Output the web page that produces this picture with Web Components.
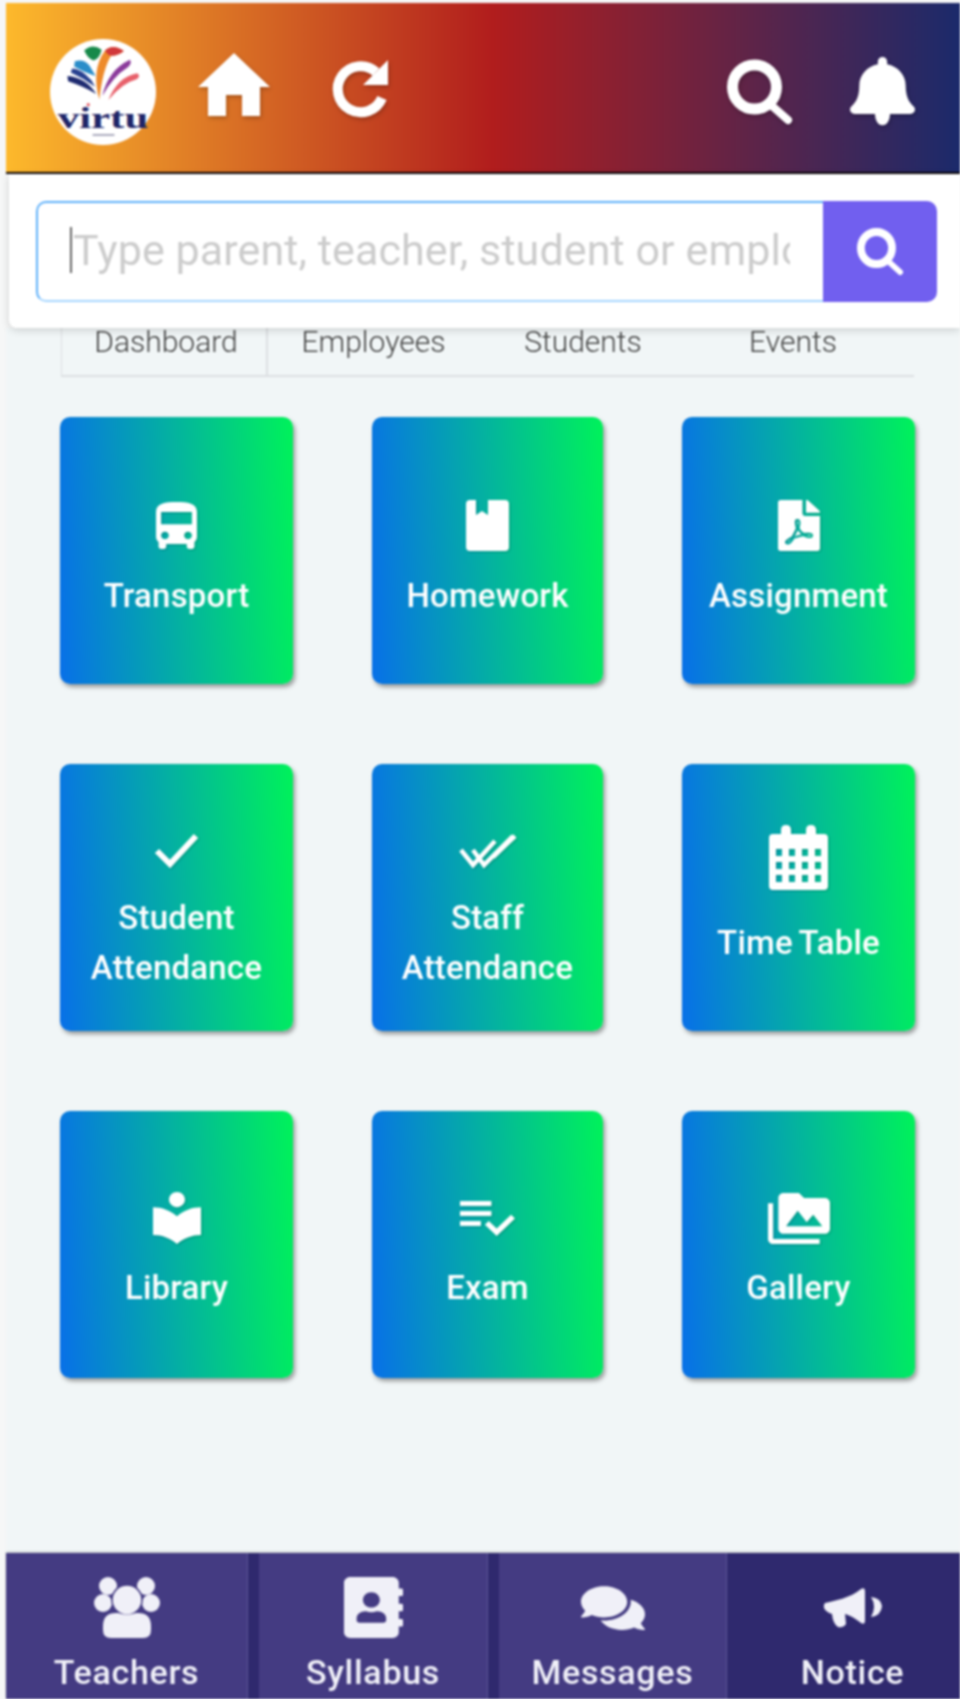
<!DOCTYPE html>
<html lang="en">
<head>
<meta charset="utf-8">
<title>Dashboard</title>
<style>
  html, body { margin: 0; padding: 0; height: 100%; }
  body { background: #f6f7f7; font-family: Roboto, "Liberation Sans", sans-serif; overflow: hidden; }
</style>
</head>
<body>
<app-shell>
  <app-header></app-header>
  <search-panel placeholder="Type parent, teacher, student or employee"></search-panel>
  <main-area>
    <tab-bar>
      <tab-item active>Dashboard</tab-item>
      <tab-item>Employees</tab-item>
      <tab-item>Students</tab-item>
      <tab-item>Events</tab-item>
    </tab-bar>
    <tile-grid>
      <app-tile icon="bus" w="41" h="47">Transport</app-tile>
      <app-tile icon="book" w="43" h="51">Homework</app-tile>
      <app-tile icon="pdf" w="42" h="51">Assignment</app-tile>
      <app-tile icon="check" w="45" h="35" shift="6">Student<br>Attendance</app-tile>
      <app-tile icon="checks" w="58" h="35" shift="6">Staff<br>Attendance</app-tile>
      <app-tile icon="calendar" w="59" h="65" shift="-30">Time Table</app-tile>
      <app-tile icon="library" w="48" h="52" lift="3">Library</app-tile>
      <app-tile icon="exam" w="55" h="35" lift="3">Exam</app-tile>
      <app-tile icon="gallery" w="62" h="51" lift="3">Gallery</app-tile>
    </tile-grid>
  </main-area>
  <bottom-nav>
    <nav-item icon="users" w="65" h="61" width="242">Teachers</nav-item>
    <nav-item icon="contacts" w="59" h="61" width="229">Syllabus</nav-item>
    <nav-item icon="comments" w="64" h="50" width="228">Messages</nav-item>
    <nav-item icon="bullhorn" w="59" h="40" width="233" active>Notice</nav-item>
  </bottom-nav>
</app-shell>

<script>
// calendar holes, 4 x 3
let calendarHoles = '';
[24, 37, 50].forEach(y => {
  [7, 20, 33, 46].forEach(x => {
    calendarHoles += `M${x} ${y}h6v7h-6z`;
  });
});

const ICONS = {
  home: { vb: '0 0 72 63', body: '<path d="M36 0L72 34H62V63H44V42H28V63H10V34H0Z"/>' },
  redo: { vb: '0 0 60 57', body: '<path d="M45 12A23 23 0 1 0 51 38" fill="none" stroke="currentColor" stroke-width="10"/><path d="M57 0V25H32Z"/>' },
  search: { vb: '0 0 65 63', body: '<circle cx="27.500" cy="26" r="22" fill="none" stroke="currentColor" stroke-width="11"/><path d="M44 44L61 59" fill="none" stroke="currentColor" stroke-width="8" stroke-linecap="round"/>' },
  bell: { vb: '0 0 448 512', body: '<path d="M224 500c30 0 52-34 52-90H172c0 56 22 90 52 90zm215.39-137.71c-19.32-20.76-55.47-51.99-55.47-154.29 0-77.7-54.48-139.9-127.94-155.16V32c0-17.67-14.32-32-31.98-32s-31.98 14.33-31.98 32v20.84C118.56 68.1 64.08 130.3 64.08 208c0 102.3-36.15 133.53-55.47 154.29-6 6.45-8.66 14.16-8.61 21.71.11 16.4 12.98 32 32.1 32h383.8c19.12 0 32-15.6 32.1-32 .05-7.55-2.61-15.27-8.61-21.71z"/>' },
  bus: { vb: '4 2 16 19', body: '<path d="M4 16c0 .88.39 1.67 1 2.22V20c0 .55.45 1 1 1h1c.55 0 1-.45 1-1v-1h8v1c0 .55.45 1 1 1h1c.55 0 1-.45 1-1v-1.78c.61-.55 1-1.34 1-2.22V6c0-3.5-3.58-4-8-4s-8 .5-8 4v10zm3.5 1c-.83 0-1.5-.67-1.5-1.5S6.67 14 7.5 14s1.5.67 1.5 1.5S8.33 17 7.5 17zm9 0c-.83 0-1.5-.67-1.5-1.5s.67-1.5 1.5-1.5 1.5.67 1.5 1.5-.67 1.5-1.5 1.5zm1.5-6H6V6h12v5z"/>' },
  book: { vb: '0 0 43 51', body: '<path d="M4 0H10V15L16 11L22 15V0H39Q43 0 43 4V47Q43 51 39 51H4Q0 51 0 47V4Q0 0 4 0Z"/>' },
  pdf: { vb: '0 0 384 512', body: '<path d="M181.9 256.1c-5-16-4.9-46.9-2-46.9 8.4 0 7.6 36.9 2 46.9zm-1.7 47.2c-7.7 20.2-17.3 43.3-28.4 62.7 18.3-7 39-17.2 62.9-21.9-12.7-9.6-24.9-23.4-34.5-40.8zM86.1 428.1c0 .8 13.2-5.4 34.9-40.2-6.7 6.3-29.1 24.5-34.9 40.2zM248 160h136v328c0 13.3-10.7 24-24 24H24c-13.3 0-24-10.7-24-24V24C0 10.7 10.7 0 24 0h200v136c0 13.2 10.8 24 24 24zm-8 171.8c-20-12.2-33.3-29-42.7-53.8 4.5-18.5 11.6-46.6 6.2-64.2-4.7-29.4-42.4-26.5-47.8-6.8-5 18.3-.4 44.1 8.1 77-11.6 27.6-28.7 64.6-40.8 85.8-.1 0-.1.1-.2.1-27.1 13.9-73.6 44.5-54.5 68 5.6 6.9 16 10 21.5 10 17.9 0 35.7-18 61.1-61.8 25.8-8.5 54.1-19.1 79-23.2 21.7 11.8 47.1 19.5 64 19.5 29.2 0 31.2-32 19.7-43.4-13.9-13.6-54.3-9.7-73.6-7.2zM377 105L279 7c-4.5-4.5-10.6-7-17-7h-6v128h128v-6.1c0-6.3-2.5-12.4-7-16.9zm-74.1 255.3c4.1-2.7-2.5-11.9-42.8-9 37.1 15.8 42.8 9 42.8 9z"/>' },
  check: { vb: '0 0 45 35', body: '<path d="M3 18L16 31L42 3" fill="none" stroke="currentColor" stroke-width="6"/>' },
  checks: { vb: '0 0 58 35', body: '<path d="M2 17L14 32L36 8M14 17L25 32L54 3M34 24L56 3" fill="none" stroke="currentColor" stroke-width="4.5"/>' },
  calendar: { vb: '0 0 59 65', body: `<path fill-rule="evenodd" d="M4 9H12V5Q12 0 17 0T22 5V9H37V5Q37 0 42 0T47 5V9H55Q59 9 59 13V61Q59 65 55 65H4Q0 65 0 61V13Q0 9 4 9Z${calendarHoles}"/>` },
  library: { vb: '3 2 18 20.55', body: '<path d="M12 11.55C9.64 9.35 6.48 8 3 8v11c3.48 0 6.64 1.35 9 3.55 2.36-2.19 5.52-3.55 9-3.55V8c-3.48 0-6.64 1.35-9 3.55zM12 8c1.66 0 3-1.34 3-3s-1.34-3-3-3-3 1.34-3 3 1.34 3 3 3z"/>' },
  exam: { vb: '2 6 21 14', body: '<path d="M14 10H2v2h12v-2zm0-4H2v2h12V6zM2 16h8v-2H2v2zm19.5-4.5L23 13l-6.99 7-4.51-4.5L13 14l3.01 3 5.49-5.5z"/>' },
  gallery: { vb: '0 2 24 20', body: '<path d="M2 6H0v5h.01L0 20c0 1.1.9 2 2 2h18v-2H2V6zm20-2h-8l-2-2H6c-1.1 0-1.99.9-1.99 2L4 16c0 1.1.9 2 2 2h16c1.1 0 2-.9 2-2V6c0-1.1-.9-2-2-2zM7 15l4.5-6 3.5 4.51 2.5-3.01L21 15H7z"/>' },
  users: { vb: '0 0 65 61', body: '<circle cx="14" cy="9" r="9"/><circle cx="52" cy="9" r="9"/><circle cx="9" cy="26" r="9"/><circle cx="57" cy="26" r="9"/><circle cx="33" cy="23" r="15" stroke="#443b82" stroke-width="1.5"/><path d="M9 53V49Q9 35 24 36Q33 39 42 36Q57 35 57 49V53Q57 61 49 61H17Q9 61 9 53Z"/>' },
  contacts: { vb: '0 0 448 512', body: '<path d="M436 160c6.6 0 12-5.4 12-12v-40c0-6.6-5.4-12-12-12h-20V48c0-26.5-21.5-48-48-48H48C21.5 0 0 21.5 0 48v416c0 26.5 21.5 48 48 48h320c26.5 0 48-21.5 48-48v-48h20c6.6 0 12-5.4 12-12v-40c0-6.6-5.4-12-12-12h-20v-64h20c6.6 0 12-5.4 12-12v-40c0-6.6-5.4-12-12-12h-20v-64h20zm-228-32c35.3 0 64 28.7 64 64s-28.7 64-64 64-64-28.7-64-64 28.7-64 64-64zm112 236.8c0 10.6-10 19.2-22.4 19.2H118.4C106 384 96 375.4 96 364.8v-19.2c0-31.8 30.1-57.6 67.2-57.6h5c12.3 5.1 25.7 8 39.8 8s27.6-2.9 39.8-8h5c37.1 0 67.2 25.8 67.2 57.6v19.2z"/>' },
  comments: { vb: '0 0 576 512', body: '<path d="M416 192c0-88.4-93.1-160-208-160S0 103.6 0 192c0 34.3 14.1 65.9 38 92-13.4 30.2-35.5 54.2-35.8 54.5-2.2 2.3-2.8 5.7-1.5 8.7S4.8 352 8 352c36.6 0 66.9-12.3 88.7-25 32.2 15.7 70.3 25 111.3 25 114.9 0 208-71.6 208-160zm122 220c23.9-26 38-57.7 38-92 0-66.9-53.5-124.2-129.3-148.1.9 6.6 1.3 13.3 1.3 20.1 0 105.9-107.7 192-240 192-10.8 0-21.3-.8-31.7-1.9C207.8 439.6 281.8 480 368 480c41 0 79.1-9.2 111.3-25 21.8 12.7 52.1 25 88.7 25 3.2 0 6.1-1.9 7.3-4.8 1.3-2.9.7-6.3-1.5-8.7-.3-.3-22.4-24.2-35.8-54.5z"/>' },
  bullhorn: { vb: '0 0 59 40', body: '<path d="M2 15C10 13 28 10 38 1Q42-1 42 3V33Q42 37 38 35C32 30 26 27 22 26L23 36Q20 40 15 39Q10 36 9 26Q3 24 1 20Q0 17 2 15Z"/><path d="M48 9Q54 18 48 29Q58 28 59 18Q58 10 48 9Z"/>' }
};

class UiIcon extends HTMLElement {
  connectedCallback() {
    const icon = ICONS[this.getAttribute('name')];
    const w = this.getAttribute('w');
    const h = this.getAttribute('h');
    this.attachShadow({ mode: 'open' });
    this.shadowRoot.innerHTML = `
      <style>
        :host { display: block; width: ${w}px; height: ${h}px; flex: none; }
        svg { display: block; width: 100%; height: 100%; fill: currentColor; overflow: visible; }
      </style>
      <svg viewBox="${icon.vb}" preserveAspectRatio="none" aria-hidden="true">${icon.body}</svg>
    `;
  }
}

class AppShell extends HTMLElement {
  constructor() {
    super();
    this.attachShadow({ mode: 'open' });
    this.shadowRoot.innerHTML = `
      <style>
        :host {
          display: flex;
          flex-direction: column;
          height: 1699px;
          box-sizing: border-box;
          padding: 3px 0 0 6px;
          overflow: hidden;
          filter: blur(0.8px);
        }
      </style>
      <slot></slot>
    `;
  }
}

class AppLogo extends HTMLElement {
  constructor() {
    super();
    this.attachShadow({ mode: 'open' });
    this.shadowRoot.innerHTML = `
      <style>
        :host { display: block; width: 106px; height: 106px; flex: none; }
        svg { display: block; width: 100%; height: 100%; }
        text { font: bold 88px "Liberation Serif", serif; fill: #1e2568; }
      </style>
      <svg viewBox="58 58 316 316">
        <circle cx="216" cy="216" r="158" fill="#fff"/>
        <path d="M160 92Q185 70 212 90Q205 118 188 122Q170 116 160 92Z" fill="#16894a"/>
        <path d="M222 92Q245 70 278 94Q262 108 240 108Q215 150 205 238Q180 150 222 92Z" fill="#ee8a2a"/>
        <path d="M222 92Q245 70 278 94Q262 108 240 108Q230 106 222 92Z" fill="#d1383a"/>
        <path d="M132 124Q160 116 176 138L194 168Q165 160 130 140Z" fill="#2a8dc9"/>
        <path d="M124 146Q150 146 182 182L192 200Q160 176 120 158Z" fill="#27408f"/>
        <path d="M110 168Q165 172 196 222Q160 200 112 184Z" fill="#1e2a70"/>
        <path d="M296 120Q304 130 290 142Q245 170 214 228Q232 150 296 120Z" fill="#8b3a9b"/>
        <path d="M318 160Q330 168 316 178Q272 190 232 240Q260 170 318 160Z" fill="#e8606a"/>
        <circle cx="172" cy="254" r="5" fill="#e8606a"/>
        <text x="216" y="322" text-anchor="middle" textLength="270" lengthAdjust="spacingAndGlyphs">virtu</text>
        <path d="M185 344H250" stroke="#9a9ab0" stroke-width="5"/>
      </svg>
    `;
  }
}

class AppHeader extends HTMLElement {
  constructor() {
    super();
    this.attachShadow({ mode: 'open' });
    this.shadowRoot.innerHTML = `
      <style>
        :host {
          display: flex;
          align-items: center;
          box-sizing: border-box;
          height: 171px;
          padding: 9px 45px 0 44px;
          color: #fff;
          background: linear-gradient(90deg, #fdb92c 0%, #b11d1d 51%, #1b2a6b 100%);
          border-bottom: 2px solid #0a0508;
          flex: none;
        }
        .icons { display: flex; flex: 1; align-items: center; filter: drop-shadow(1px 2px 2px rgba(0,0,0,.25)); }
        .home { margin-left: 42px; margin-top: -15px; }
        .redo { margin-left: 61px; margin-top: -8px; }
        .right { display: flex; align-items: center; gap: 58px; margin-left: auto; }
      </style>
      <app-logo></app-logo>
      <div class="icons">
        <ui-icon class="home" name="home" w="72" h="63"></ui-icon>
        <ui-icon class="redo" name="redo" w="60" h="57"></ui-icon>
        <div class="right">
          <ui-icon name="search" w="65" h="63"></ui-icon>
          <ui-icon name="bell" w="65" h="70"></ui-icon>
        </div>
      </div>
    `;
  }
}

class SearchPanel extends HTMLElement {
  connectedCallback() {
    this.attachShadow({ mode: 'open' });
    this.shadowRoot.innerHTML = `
      <style>
        :host {
          display: flex;
          position: relative;
          z-index: 2;
          flex: none;
          height: 154px;
          box-sizing: border-box;
          margin-left: 3px;
          padding: 27px 23px 26px 27px;
          background: #fff;
          border-radius: 0 0 0 8px;
          box-shadow: 0 2px 8px rgba(0,0,0,.16);
        }
        .field {
          flex: 1;
          display: flex;
          align-items: center;
          min-width: 0;
          box-sizing: border-box;
          padding: 0 33px 3px 32px;
          border: 2px solid #5eb0fa;
          border-bottom-color: #a6d6ff;
          border-right: 0;
          border-radius: 10px 0 0 10px;
        }
        .caret { flex: none; width: 2px; height: 46px; margin-right: 1px; background: #666; }
        .text {
          overflow: hidden;
          white-space: nowrap;
          font: 400 43px Roboto, sans-serif;
          letter-spacing: .1px;
          color: #ccc;
        }
        button {
          flex: none;
          width: 114px;
          display: flex;
          align-items: center;
          justify-content: center;
          padding: 0;
          border: 0;
          color: #fff;
          background: #715fef;
          border-radius: 0 10px 10px 0;
        }
      </style>
      <div class="field"><span class="caret"></span><span class="text">${this.getAttribute('placeholder')}</span></div>
      <button type="button"><ui-icon name="search" w="46" h="46"></ui-icon></button>
    `;
  }
}

class MainArea extends HTMLElement {
  constructor() {
    super();
    this.attachShadow({ mode: 'open' });
    this.shadowRoot.innerHTML = `
      <style>
        :host { display: block; flex: 1; min-height: 0; background: #f1f6f7; }
      </style>
      <slot></slot>
    `;
  }
}

class TabBar extends HTMLElement {
  constructor() {
    super();
    this.attachShadow({ mode: 'open' });
    this.shadowRoot.innerHTML = `
      <style>
        :host {
          display: grid;
          grid-template-columns: 207px 211px 208px 212px;
          height: 47px;
          margin: 0 46px 0 55px;
          border-bottom: 2px solid #dcdfe2;
        }
      </style>
      <slot></slot>
    `;
  }
}

class TabItem extends HTMLElement {
  constructor() {
    super();
    this.attachShadow({ mode: 'open' });
    this.shadowRoot.innerHTML = `
      <style>
        :host {
          display: block;
          box-sizing: border-box;
          font: 300 30px/28px Roboto, sans-serif;
          color: #444;
          text-align: center;
        }
        :host([active]) {
          border-left: 1px solid #dcdfe2;
          border-right: 2px solid #dcdfe2;
          padding-left: 4px;
        }
      </style>
      <slot></slot>
    `;
  }
}

class TileGrid extends HTMLElement {
  constructor() {
    super();
    this.attachShadow({ mode: 'open' });
    this.shadowRoot.innerHTML = `
      <style>
        :host {
          display: grid;
          grid-template-columns: 233px 231px 233px;
          grid-auto-rows: 267px;
          justify-content: space-between;
          align-content: start;
          row-gap: 80px;
          padding: 40px 45px 0 54px;
        }
      </style>
      <slot></slot>
    `;
  }
}

class AppTile extends HTMLElement {
  connectedCallback() {
    const shift = Number(this.getAttribute('shift') || 0);
    const lift = Number(this.getAttribute('lift') || 0);
    this.attachShadow({ mode: 'open' });
    this.shadowRoot.innerHTML = `
      <style>
        :host {
          display: flex;
          flex-direction: column;
          align-items: center;
          justify-content: center;
          color: #fff;
          background: linear-gradient(87deg, #0870e8 0%, #00f25a 100%);
          border-radius: 10px;
          box-shadow: 2px 3px 4px rgba(0,0,0,.38);
        }
        .slot {
          display: flex;
          align-items: center;
          justify-content: center;
          height: 90px;
        }
        ui-icon {
          margin-top: ${shift > 0 ? shift : 0}px;
          margin-bottom: ${shift < 0 ? -shift : 0}px;
          filter: drop-shadow(1px 1px 1px rgba(0,0,0,.2));
        }
        .label {
          font: 500 33px/50px Roboto, sans-serif;
          letter-spacing: .2px;
          word-spacing: -2px;
          text-align: center;
          margin-bottom: ${lift}px;
        }
      </style>
      <div class="slot">
        <ui-icon name="${this.getAttribute('icon')}" w="${this.getAttribute('w')}" h="${this.getAttribute('h')}"></ui-icon>
      </div>
      <div class="label"><slot></slot></div>
    `;
  }
}

class BottomNav extends HTMLElement {
  constructor() {
    super();
    this.attachShadow({ mode: 'open' });
    this.shadowRoot.innerHTML = `
      <style>
        :host {
          display: flex;
          flex: none;
          height: 146px;
          gap: 11px;
          background: #2f296e;
          box-shadow: 0 -1px 2px rgba(0,0,0,.25);
          position: relative;
        }
      </style>
      <slot></slot>
    `;
  }
}

class NavItem extends HTMLElement {
  connectedCallback() {
    this.attachShadow({ mode: 'open' });
    this.shadowRoot.innerHTML = `
      <style>
        :host {
          display: flex;
          flex-direction: column;
          align-items: center;
          box-sizing: border-box;
          width: ${this.getAttribute('width')}px;
          color: #f0f0f8;
          background: #443b82;
          border-right: 1px solid #5d5596;
        }
        :host([active]) { background: #2f296e; border-right: 0; padding-left: 18px; margin-left: -11px; }
        .slot { display: flex; align-items: center; justify-content: center; height: 109px; flex: none; }
        .label { font: 500 34px/38px Roboto, sans-serif; letter-spacing: .7px; margin-top: -9px; }
      </style>
      <div class="slot"><ui-icon name="${this.getAttribute('icon')}" w="${this.getAttribute('w')}" h="${this.getAttribute('h')}"></ui-icon></div>
      <div class="label"><slot></slot></div>
    `;
  }
}

customElements.define('ui-icon', UiIcon);
customElements.define('app-shell', AppShell);
customElements.define('app-logo', AppLogo);
customElements.define('app-header', AppHeader);
customElements.define('search-panel', SearchPanel);
customElements.define('main-area', MainArea);
customElements.define('tab-bar', TabBar);
customElements.define('tab-item', TabItem);
customElements.define('tile-grid', TileGrid);
customElements.define('app-tile', AppTile);
customElements.define('bottom-nav', BottomNav);
customElements.define('nav-item', NavItem);
</script>
</body>
</html>
